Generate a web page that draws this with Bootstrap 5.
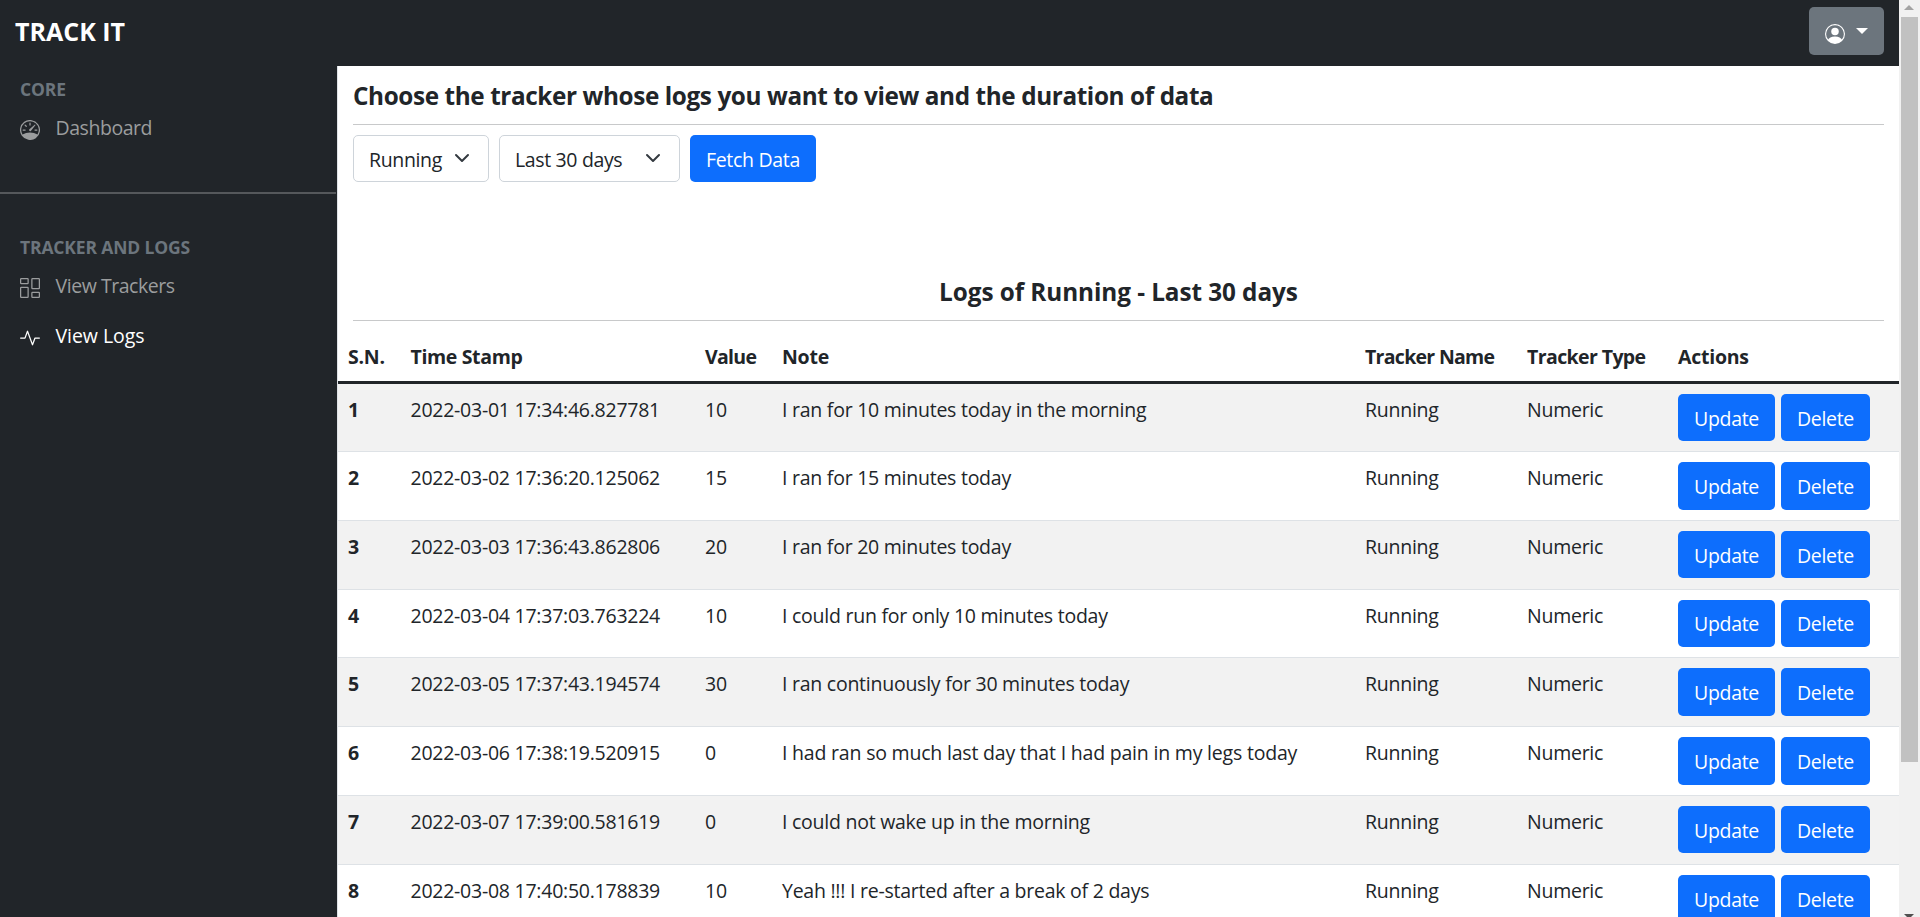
<!DOCTYPE html>
<html lang="en">
<head>
<meta charset="utf-8">
<meta name="viewport" content="width=device-width, initial-scale=1">
<title>Track It - Logs</title>
<link href="https://cdn.jsdelivr.net/npm/bootstrap@5.3.0/dist/css/bootstrap.min.css" rel="stylesheet">
<style>
:root { font-size: 20px; }
body { --bs-body-font-family: "Open Sans", "Noto Sans", sans-serif; font-family: "Open Sans", "Noto Sans", sans-serif; font-size: 19.5px; line-height: 30px; letter-spacing: -.25px; color: #212529; }
.topbar { height: 66px; padding: 0 15px; }
.brand { font-size: 25px; font-weight: 700; letter-spacing: 0; line-height: 30px; margin-top: -4px; }
.user-btn { width: 75px; height: 48px; margin: 7px 0 11px; padding: 0 16px; border-radius: 5px; background: #6c757d; }
.user-btn svg { margin-top: 6px; }
.user-btn::after { border-top-width: 6px; border-left-width: 6px; border-right-width: 6px; margin: 0 0 1px; }
.side { width: 337px; padding-top: 10px; }
.side-label { font-size: 17.5px; line-height: 26.2px; font-weight: 700; color: #6c757d; padding-left: 20px; letter-spacing: -.15px; }
.side .nav-link { padding: 11px 20px 9px; gap: 15.5px; color: #9b9d9e; letter-spacing: -.45px; }
.side .nav-link svg { margin-top: 3px; }
.side .nav-link.active { color: #fff; letter-spacing: -.05px; }
.side-rule { height: 2px; margin: 40px 1px 40px 0; background: #55585b; }
.pane { border-left: 1px solid #dee2e6; }
.pane-inner { padding: 15px 15px 0; }
.pane h5 { font-size: 24.3px; line-height: 30px; font-weight: 700; margin: 0; letter-spacing: -.39px; }
.rule { height: 1px; margin: 13px 0 10px; background: #c8c9ca; }
.form-select { font-size: 19.5px; line-height: 30px; height: 47px; padding: 8.5px 30px 6.5px 15px; border-color: #ced4da; border-radius: 5px; background-position: right 18px top 14px; background-size: 16px 16px; letter-spacing: -.35px; }
.pick-tracker { width: 136px; }
.pick-range { width: 181px; }
.btn { font-size: 19.5px; line-height: 30px; border-radius: 5px; }
.btn-primary { --bs-btn-bg: #0d6efd; height: 47.5px; padding: 8.5px 0 6.5px; border: 0; letter-spacing: -.3px; }
.fetch { width: 126px; height: 47px; }
.pane h5.log-head { margin-top: 95px; letter-spacing: -.06px; }
.log-table { table-layout: fixed; margin: 0; border-collapse: separate; border-spacing: 0; line-height: 30px; }
.log-table th, .log-table td { padding: 11px 10px 9px; vertical-align: top; white-space: nowrap; }
.log-table th:nth-child(2), .log-table td:nth-child(2) { padding-left: 9.5px; }
.log-table thead th { height: 53px; padding-top: 11px; padding-bottom: 9px; border-bottom: 3px solid #212529; line-height: 30px; }
.log-table tbody th, .log-table tbody td { height: 68.8px; border-bottom: 1px solid #dee2e6; box-shadow: none; }
.log-table tbody tr:first-child > * { height: 68px; }
.log-table tbody td:last-child { padding: 10px 10px 9px; }
.log-table tbody tr:first-child .btn { height: 47px; }
.log-table tbody tr:nth-child(odd) > * { background: #f2f2f2; }
.long-note { letter-spacing: -.2px; }
.update { width: 97px; }
.remove { width: 89px; }
.scroller { width: 21px; background: #f1f1f1; padding-top: 5px; }
.scroller .up { border: 5px solid transparent; border-top: 0; border-bottom-color: #a3a3a3; }
.scroller .thumb { width: 17px; height: 745px; margin-top: 7px; background: #c1c1c1; }
.scroller .down { border: 5px solid transparent; border-bottom: 0; border-top-color: #505050; margin-top: 152px; }
</style>
</head>
<body class="vh-100 overflow-hidden d-flex">
<div class="flex-grow-1 d-flex flex-column bg-dark vh-100 overflow-hidden">
  <nav class="topbar d-flex align-items-center justify-content-between text-white flex-shrink-0">
    <span class="brand">TRACK IT</span>
    <button class="btn user-btn dropdown-toggle text-white border-0 d-flex align-items-center justify-content-between" type="button" aria-label="Account">
      <svg width="20" height="20" fill="currentColor" viewBox="0 0 16 16"><path d="M11 6a3 3 0 1 1-6 0 3 3 0 0 1 6 0z"/><path fill-rule="evenodd" d="M0 8a8 8 0 1 1 16 0A8 8 0 0 1 0 8zm8-7a7 7 0 0 0-5.468 11.37C3.242 11.226 4.805 10 8 10s4.757 1.225 5.468 2.37A7 7 0 0 0 8 1z"/></svg>
    </button>
  </nav>
  <div class="d-flex flex-grow-1">
    <aside class="side flex-shrink-0">
      <div class="side-label">CORE</div>
      <a class="nav-link d-flex align-items-center" href="#">
        <svg width="20" height="20" fill="currentColor" viewBox="0 0 16 16"><path d="M8 2a.5.5 0 0 1 .5.5V4a.5.5 0 0 1-1 0V2.5A.5.5 0 0 1 8 2zM3.732 3.732a.5.5 0 0 1 .707 0l.915.914a.5.5 0 1 1-.708.708l-.914-.915a.5.5 0 0 1 0-.707zM2 8a.5.5 0 0 1 .5-.5h1.586a.5.5 0 0 1 0 1H2.5A.5.5 0 0 1 2 8zm9.5 0a.5.5 0 0 1 .5-.5h1.5a.5.5 0 0 1 0 1H12a.5.5 0 0 1-.5-.5zm.754-4.246a.389.389 0 0 0-.527-.02L7.547 7.31A.91.91 0 1 0 8.85 8.569l3.434-4.297a.389.389 0 0 0-.029-.518z"/><path fill-rule="evenodd" d="M6.664 15.889A8 8 0 1 1 9.336.11a8 8 0 0 1-2.672 15.78zm-4.665-4.283A11.945 11.945 0 0 1 8 10c2.186 0 4.236.585 6.001 1.606a7 7 0 1 0-12.002 0z"/></svg>
        <span>Dashboard</span>
      </a>
      <div class="side-rule"></div>
      <div class="side-label">TRACKER AND LOGS</div>
      <a class="nav-link d-flex align-items-center" href="#">
        <svg width="20" height="20" fill="currentColor" viewBox="0 0 16 16"><path d="M6 1v3H1V1h5zM1 0a1 1 0 0 0-1 1v3a1 1 0 0 0 1 1h5a1 1 0 0 0 1-1V1a1 1 0 0 0-1-1H1zm14 12v3h-5v-3h5zm-5-1a1 1 0 0 0-1 1v3a1 1 0 0 0 1 1h5a1 1 0 0 0 1-1v-3a1 1 0 0 0-1-1h-5zM6 8v7H1V8h5zM1 7a1 1 0 0 0-1 1v7a1 1 0 0 0 1 1h5a1 1 0 0 0 1-1V8a1 1 0 0 0-1-1H1zm14-6v7h-5V1h5zm-5-1a1 1 0 0 0-1 1v7a1 1 0 0 0 1 1h5a1 1 0 0 0 1-1V1a1 1 0 0 0-1-1h-5z"/></svg>
        <span>View Trackers</span>
      </a>
      <a class="nav-link active d-flex align-items-center" href="#">
        <svg width="20" height="20" fill="currentColor" viewBox="0 0 16 16"><path fill-rule="evenodd" d="M6 2a.5.5 0 0 1 .47.33L10 12.036l1.53-4.208A.5.5 0 0 1 12 7.5h3.5a.5.5 0 0 1 0 1h-3.15l-1.88 5.17a.5.5 0 0 1-.94 0L6 3.964 4.47 8.171A.5.5 0 0 1 4 8.5H.5a.5.5 0 0 1 0-1h3.15l1.88-5.17A.5.5 0 0 1 6 2Z"/></svg>
        <span>View Logs</span>
      </a>
    </aside>
    <main class="pane flex-grow-1 bg-white">
      <div class="pane-inner">
        <h5>Choose the tracker whose logs you want to view and the duration of data</h5>
        <div class="rule"></div>
        <div class="d-flex gap-2">
          <select class="form-select pick-tracker" aria-label="Tracker"><option>Running</option></select>
          <select class="form-select pick-range" aria-label="Duration"><option>Last 30 days</option></select>
          <button class="btn btn-primary fetch" type="button">Fetch Data</button>
        </div>
        <h5 class="log-head text-center">Logs of Running - Last 30 days</h5>
        <div class="rule"></div>
      </div>
      <table class="table log-table">
        <colgroup><col style="width:63px"><col style="width:294px"><col style="width:77px"><col style="width:583px"><col style="width:162px"><col style="width:151px"><col></colgroup>
        <thead><tr>
          <th>S.N.</th><th style="letter-spacing:-.35px">Time Stamp</th><th style="letter-spacing:-.7px">Value</th><th>Note</th><th style="letter-spacing:-.7px">Tracker Name</th><th style="letter-spacing:-.6px">Tracker Type</th><th>Actions</th>
        </tr></thead>
        <tbody id="logs"></tbody>
      </table>
    </main>
  </div>
</div>
<div class="scroller d-flex flex-column align-items-center flex-shrink-0 vh-100 overflow-hidden">
  <div class="up"></div><div class="thumb flex-shrink-0"></div><div class="down"></div>
</div>
<script src="https://cdn.jsdelivr.net/npm/bootstrap@5.3.0/dist/js/bootstrap.bundle.min.js"></script>
<script>
const logs = [
  ['2022-03-01 17:34:46.827781', 10, 'I ran for 10 minutes today in the morning'],
  ['2022-03-02 17:36:20.125062', 15, 'I ran for 15 minutes today'],
  ['2022-03-03 17:36:43.862806', 20, 'I ran for 20 minutes today'],
  ['2022-03-04 17:37:03.763224', 10, 'I could run for only 10 minutes today'],
  ['2022-03-05 17:37:43.194574', 30, 'I ran continuously for 30 minutes today'],
  ['2022-03-06 17:38:19.520915', 0, 'I had ran so much last day that I had pain in my legs today'],
  ['2022-03-07 17:39:00.581619', 0, 'I could not wake up in the morning'],
  ['2022-03-08 17:40:50.178839', 10, 'Yeah !!! I re-started after a break of 2 days']
];
document.getElementById('logs').innerHTML = logs.map(([time, value, note], i) => `<tr>
  <th>${i + 1}</th><td>${time}</td><td>${value}</td><td class="${note.length > 50 ? 'long-note' : ''}">${note}</td><td>Running</td><td>Numeric</td>
  <td><div class="d-flex" style="column-gap:6px"><button class="btn btn-primary update">Update</button><button class="btn btn-primary remove">Delete</button></div></td>
</tr>`).join('');
</script>
</body>
</html>
